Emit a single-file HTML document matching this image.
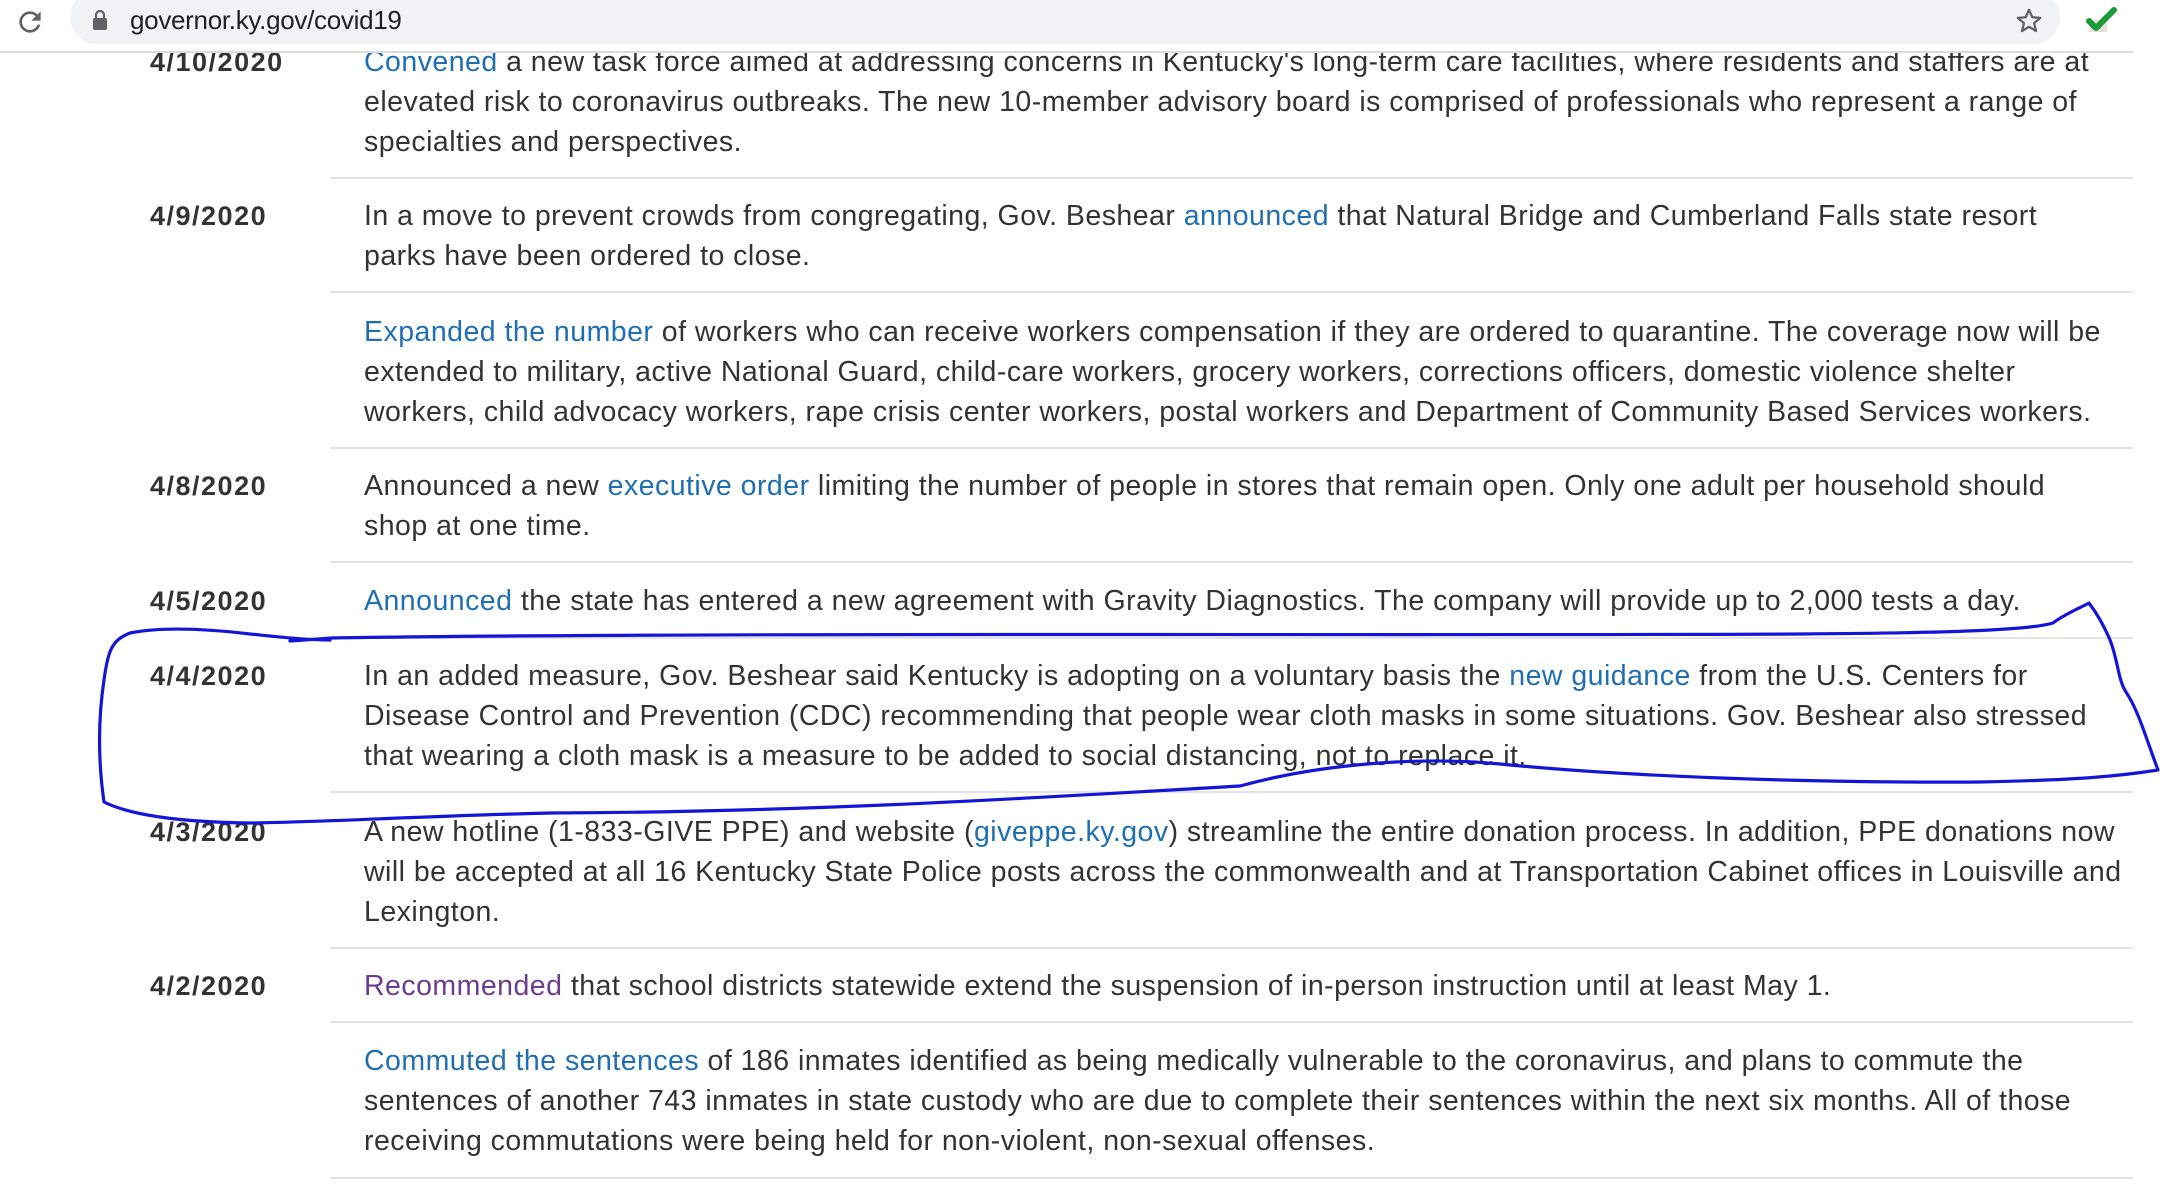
<!DOCTYPE html>
<html><head><meta charset="utf-8"><style>
html,body{margin:0;padding:0;background:#fff;width:2160px;height:1195px;overflow:hidden;position:relative;font-family:"Liberation Sans",sans-serif}
.bar{position:absolute;left:70px;top:-10px;width:1990px;height:54px;background:#f1f3f4;border-radius:27px}
.url{position:absolute;left:130px;top:5px;font-size:26px;color:#202124;letter-spacing:-0.3px}
.topline{position:absolute;left:0;top:51px;width:2133px;height:2px;background:#dadce0}
.clip{position:absolute;left:0;top:53px;width:2160px;height:1142px;overflow:hidden}
.l{position:absolute;left:364px;font-size:28.5px;letter-spacing:0.47px;line-height:40px;color:#333;white-space:nowrap}
.d{position:absolute;left:150px;font-size:27px;letter-spacing:1.5px;line-height:40px;color:#333;font-weight:bold;white-space:nowrap}
a{color:#1f6fb2;text-decoration:none}
a.v{color:#6b3d8f}
.s{position:absolute;left:330px;width:1803px;height:2px;background:#e3e3e3}
</style></head><body>
<div class="bar"></div>
<svg style="position:absolute;left:14px;top:6px" width="32" height="32" viewBox="0 0 24 24"><path d="M17.65 6.35A7.960 7.960 0 0 0 12 4a8 8 0 1 0 7.73 10h-2.08A6 6 0 1 1 12 6c1.66 0 3.14.69 4.22 1.780L13 11h7V4z" fill="#5f6368"/></svg>
<svg style="position:absolute;left:92px;top:9px" width="16" height="22" viewBox="0 0 16 22"><path d="M4 9V6a4 4 0 0 1 8 0v3" stroke="#5f6368" stroke-width="2.2" fill="none"/><rect x="1" y="9" width="14" height="12" rx="2" fill="#5f6368"/></svg>
<div class="url">governor.ky.gov/covid19</div>
<svg style="position:absolute;left:2014px;top:6px" width="30" height="30" viewBox="0 0 24 24"><path d="M12 3l2.6 6 6.4.5-4.9 4.2 1.5 6.3L12 16.6 6.4 20l1.5-6.3L3 9.5 9.4 9z" fill="none" stroke="#5f6368" stroke-width="1.8" stroke-linejoin="round"/></svg>
<svg style="position:absolute;left:2086px;top:6px" width="32" height="28" viewBox="0 0 32 28"><rect x="3" y="14" width="18" height="12" fill="#e8e0d8"/><path d="M3 15l7 7L28 4" stroke="#1d9a3a" stroke-width="6" fill="none" stroke-linecap="round" stroke-linejoin="round"/></svg>
<div class="topline"></div>
<div class="clip"><div style="position:absolute;left:0;top:-53px;width:2160px;height:1195px">
<div class="d" style="top:42px">4/10/2020</div>
<div class="l" style="top:42px"><a>Convened</a> a new task force aimed at addressing concerns in Kentucky's long-term care facilities, where residents and staffers are at</div>
<div class="l" style="top:82px">elevated risk to coronavirus outbreaks. The new 10-member advisory board is comprised of professionals who represent a range of</div>
<div class="l" style="top:122px">specialties and perspectives.</div>
<div class="s" style="top:177px"></div>
<div class="d" style="top:196px">4/9/2020</div>
<div class="l" style="top:196px">In a move to prevent crowds from congregating, Gov. Beshear <a>announced</a> that Natural Bridge and Cumberland Falls state resort</div>
<div class="l" style="top:236px">parks have been ordered to close.</div>
<div class="s" style="top:291px"></div>
<div class="l" style="top:312px"><a>Expanded the number</a> of workers who can receive workers compensation if they are ordered to quarantine. The coverage now will be</div>
<div class="l" style="top:352px">extended to military, active National Guard, child-care workers, grocery workers, corrections officers, domestic violence shelter</div>
<div class="l" style="top:392px">workers, child advocacy workers, rape crisis center workers, postal workers and Department of Community Based Services workers.</div>
<div class="s" style="top:447px"></div>
<div class="d" style="top:466px">4/8/2020</div>
<div class="l" style="top:466px">Announced a new <a>executive order</a> limiting the number of people in stores that remain open. Only one adult per household should</div>
<div class="l" style="top:506px">shop at one time.</div>
<div class="s" style="top:561px"></div>
<div class="d" style="top:581px">4/5/2020</div>
<div class="l" style="top:581px"><a>Announced</a> the state has entered a new agreement with Gravity Diagnostics. The company will provide up to 2,000 tests a day.</div>
<div class="s" style="top:637px"></div>
<div class="d" style="top:656px">4/4/2020</div>
<div class="l" style="top:656px">In an added measure, Gov. Beshear said Kentucky is adopting on a voluntary basis the <a>new guidance</a> from the U.S. Centers for</div>
<div class="l" style="top:696px">Disease Control and Prevention (CDC) recommending that people wear cloth masks in some situations. Gov. Beshear also stressed</div>
<div class="l" style="top:736px">that wearing a cloth mask is a measure to be added to social distancing, not to replace it.</div>
<div class="s" style="top:791px"></div>
<div class="d" style="top:812px">4/3/2020</div>
<div class="l" style="top:812px">A new hotline (1-833-GIVE PPE) and website (<a>giveppe.ky.gov</a>) streamline the entire donation process. In addition, PPE donations now</div>
<div class="l" style="top:852px">will be accepted at all 16 Kentucky State Police posts across the commonwealth and at Transportation Cabinet offices in Louisville and</div>
<div class="l" style="top:892px">Lexington.</div>
<div class="s" style="top:947px"></div>
<div class="d" style="top:966px">4/2/2020</div>
<div class="l" style="top:966px"><a class="v">Recommended</a> that school districts statewide extend the suspension of in-person instruction until at least May 1.</div>
<div class="s" style="top:1021px"></div>
<div class="l" style="top:1041px"><a>Commuted the sentences</a> of 186 inmates identified as being medically vulnerable to the coronavirus, and plans to commute the</div>
<div class="l" style="top:1081px">sentences of another 743 inmates in state custody who are due to complete their sentences within the next six months. All of those</div>
<div class="l" style="top:1121px">receiving commutations were being held for non-violent, non-sexual offenses.</div>
<div class="s" style="top:1177px"></div>
</div></div>
<svg style="position:absolute;left:0;top:0" width="2160" height="1195" viewBox="0 0 2160 1195">
<path d="M290 641 L332 638 C700 632 1400 636 1800 634 C1950 633 2030 630 2053 623 C2065 614 2080 608 2089 603 C2098 615 2105 628 2110 640 C2118 660 2118 680 2126 692 C2138 710 2145 735 2158 770 C2120 776 2080 780 1980 782 C1800 783 1620 776 1500 764 C1420 756 1320 764 1240 786 C1000 800 800 812 551 813 C420 816 330 822 250 823 C180 822 130 815 104 802 C98 760 98 720 104 680 C108 650 112 640 130 633 C160 627 200 628 250 634 C280 637 305 640 330 640" fill="none" stroke="#1515d8" stroke-width="3.2" stroke-linejoin="round" stroke-linecap="round"/>
</svg>
</body></html>
